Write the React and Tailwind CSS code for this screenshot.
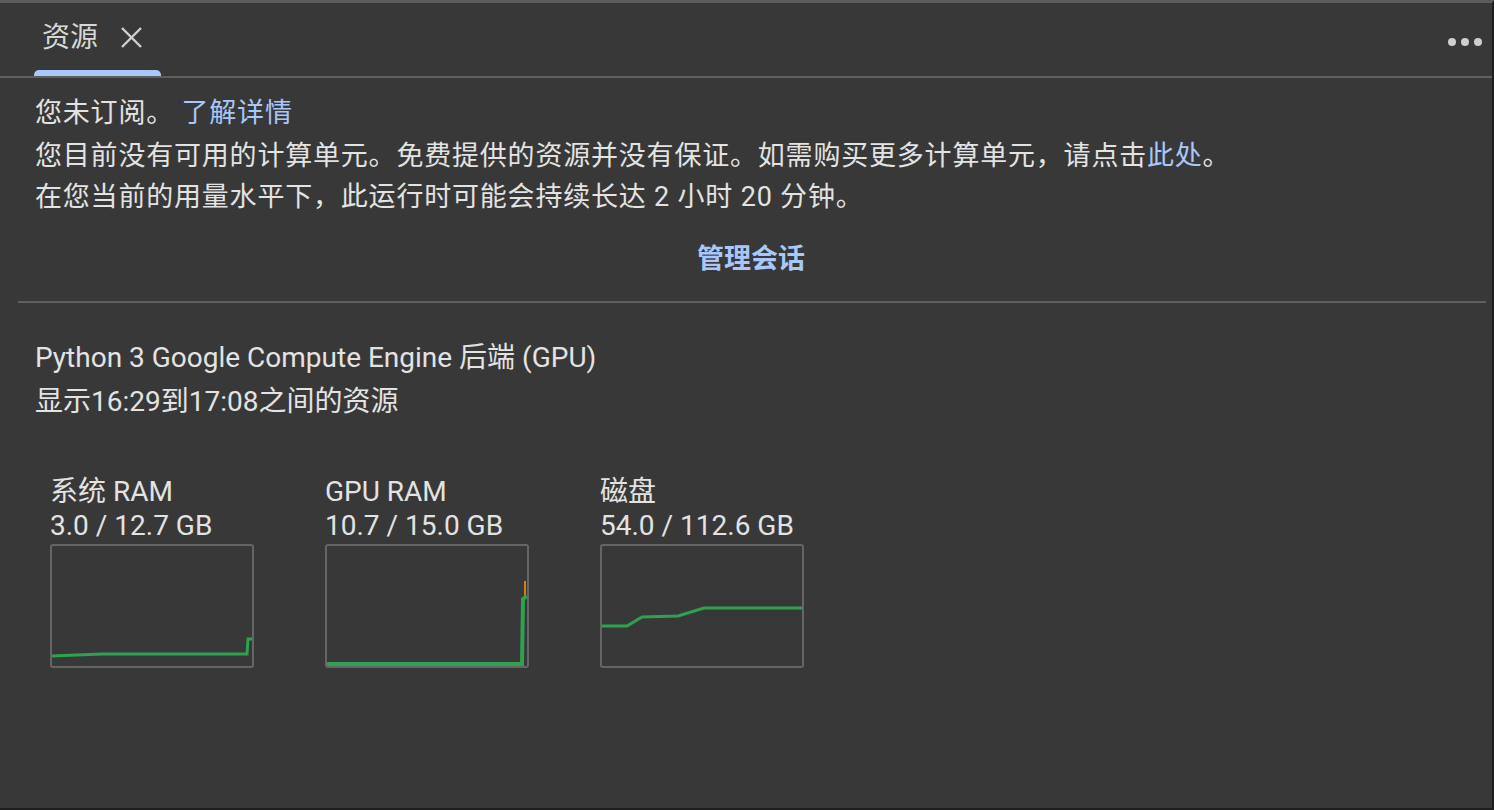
import React from "react";

const font = { fontFamily: "Roboto, 'Noto Sans CJK SC', sans-serif" };

function Chart({ children }) {
  return (
    <div className="w-[204px] h-[124px] border-2 border-[#656565] rounded-[3px] overflow-hidden">
      <svg width="200" height="120" viewBox="0 0 200 120">
        {children}
      </svg>
    </div>
  );
}

function Metric({ label, value, children }) {
  return (
    <div className="flex flex-col w-[204px]">
      <div className="text-[28px] leading-[34px] text-[#e3e3e3]">{label}</div>
      <div className="text-[28px] leading-[34px] text-[#e3e3e3]">{value}</div>
      <div className="mt-[1px]">
        <Chart>{children}</Chart>
      </div>
    </div>
  );
}

export default function App() {
  return (
    <div
      className="w-[1494px] h-[810px] bg-[#383838] text-[#e3e3e3] flex flex-col border-t-[3px] border-t-[#5c5c5c] border-r-2 border-r-[#1e1e1e] border-b-2 border-b-[#1e1e1e] overflow-hidden"
      style={font}
    >
      {/* Tab bar */}
      <div className="flex items-end justify-between h-[75px] border-b-2 border-b-[#5f5f5f] pl-[34px] pr-[10px]">
        <div className="flex flex-col w-[127px]">
          <div className="flex items-center h-[69px] pl-[8px] pt-[4px] gap-[22px]">
            <span className="text-[28px] leading-none text-[#d7d7d7]">资源</span>
            <svg width="23" height="23" viewBox="0 0 23 23">
              <path d="M2 2 L21 21 M21 2 L2 21" stroke="#cfcfcf" strokeWidth="2.4" />
            </svg>
          </div>
          <div className="h-[6px] bg-[#a8c7fa] rounded-t-[5px]" />
        </div>
        <div className="flex items-center gap-[5px] self-center mt-[4px]">
          <span className="w-[8px] h-[8px] rounded-full bg-[#cfcfcf]" />
          <span className="w-[8px] h-[8px] rounded-full bg-[#cfcfcf]" />
          <span className="w-[8px] h-[8px] rounded-full bg-[#cfcfcf]" />
        </div>
      </div>

      {/* Subscription info */}
      <div className="pl-[35px] pt-[14px] text-[27px] leading-[43px] tracking-[0.8px]">
        <div>
          您未订阅。 <span className="text-[#a8c7fa]">了解详情</span>
        </div>
        <div>
          您目前没有可用的计算单元。免费提供的资源并没有保证。如需购买更多计算单元，请点击
          <span className="text-[#a8c7fa]">此处</span>。
        </div>
        <div className="-mt-[2px]">在您当前的用量水平下，此运行时可能会持续长达 2 小时 20 分钟。</div>
      </div>

      <div className="flex justify-center pl-[10px] pt-[20px] pb-[22px]">
        <span className="text-[27px] leading-[40px] font-bold text-[#a8c7fa]">管理会话</span>
      </div>

      <div className="ml-[18px] mr-[6px] h-[2px] bg-[#5f5f5f]" />

      {/* Backend info */}
      <div className="pl-[35px] pt-[33px] text-[28px] leading-[43px]">
        <div>Python 3 Google Compute Engine 后端 (GPU)</div>
        <div className="mt-[1px]">显示16:29到17:08之间的资源</div>
      </div>

      <div className="flex gap-[71px] pl-[50px] pt-[52px]">
        <Metric label="系统 RAM" value="3.0 / 12.7 GB">
          <polyline
            points="0,110 50,108 195,108 196,93 200,93"
            fill="none"
            stroke="#2ea24f"
            strokeWidth="3"
          />
        </Metric>
        <Metric label="GPU RAM" value="10.7 / 15.0 GB">
          <line x1="198" y1="50" x2="198" y2="35" stroke="#d47d1e" strokeWidth="2" />
          <polyline
            points="0,118 195,118 196,53 200,50"
            fill="none"
            stroke="#2ea24f"
            strokeWidth="4"
          />
        </Metric>
        <Metric label="磁盘" value="54.0 / 112.6 GB">
          <polyline
            points="0,80 25,80 40,71 76,70 102,62 200,62"
            fill="none"
            stroke="#2ea24f"
            strokeWidth="3"
          />
        </Metric>
      </div>
    </div>
  );
}
